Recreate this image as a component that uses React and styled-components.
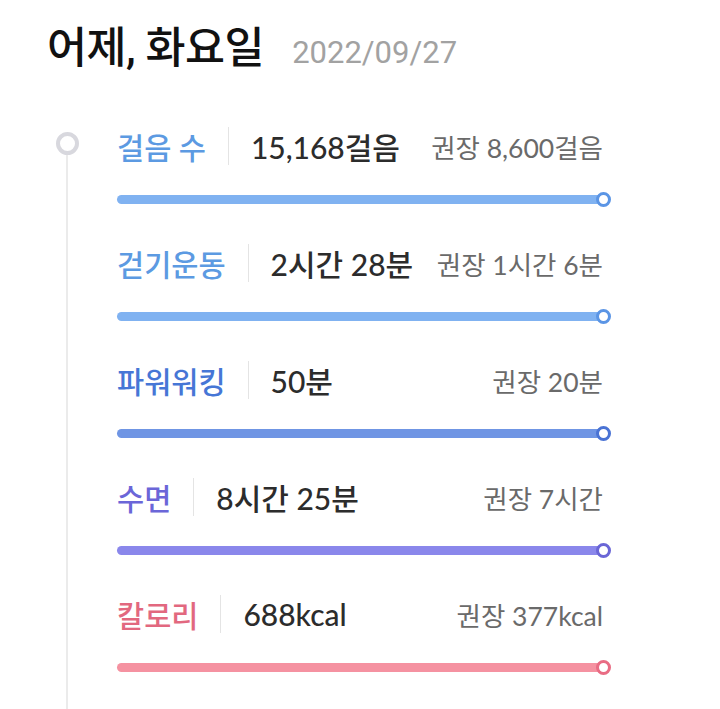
import React from 'react';
import styled, { createGlobalStyle } from "styled-components";

const GlobalStyle = createGlobalStyle`
  html, body {
    margin: 0;
    padding: 0;
    background: #ffffff;
  }
  body {
    font-family: "Lato", "Noto Sans CJK KR", sans-serif;
  }
`

const Page = styled.div`
  width: 720px;
  height: 709px;
  overflow: hidden;
  background: #ffffff;
  padding: 26px 0 0 47px;
  box-sizing: border-box;
`

const Header = styled.div`
  display: flex;
  align-items: baseline;
  gap: 28px;
  height: 46px;
`

const Title = styled.span`
  font-family: "Roboto", "Noto Sans CJK KR", sans-serif;
  font-size: 43.5px;
  font-weight: 500;
  color: #111111;
  line-height: 46px;
  letter-spacing: -0.5px;
`

const DateText = styled.span`
  font-family: "Roboto", "Noto Sans CJK KR", sans-serif;
  font-size: 31px;
  font-weight: 400;
  color: #a2a2a2;
`

const Body = styled.div`
  display: flex;
  margin-top: 54px;
  height: 600px;
`

const Timeline = styled.div`
  width: 40px;
  display: flex;
  flex-direction: column;
  align-items: center;
  margin-right: 30px;
  padding-top: 6px;
`

const TimelineDot = styled.div`
  width: 15px;
  height: 15px;
  border-radius: 50%;
  border: 4px solid #d8d8de;
  background: #ffffff;
`

const TimelineLine = styled.div`
  flex: 1;
  width: 2px;
  background: #ebebeb;
`

const List = styled.div`
  width: 494px;
  display: flex;
  flex-direction: column;
`

const Row = styled.div`
  height: 117px;
  display: flex;
  flex-direction: column;
`

const TopLine = styled.div`
  height: 40px;
  display: flex;
  align-items: center;
`

const Label = styled.span`
  font-size: 29.5px;
  font-weight: 500;
  color: ${p => p.color};
`

const Divider = styled.div`
  width: 1px;
  height: 38px;
  background: #e4e4e4;
  margin: 0 22px;
`

const Value = styled.span`
  font-size: 30px;
  font-weight: 500;
  color: #2c2c2c;
`

const Goal = styled.span`
  margin-left: auto;
  padding-right: 8px;
  font-size: 26.5px;
  font-weight: 400;
  color: #6a6a6a;
`

const Bar = styled.div`
  margin-top: 25px;
  height: 16px;
  display: flex;
  align-items: center;
`

const BarFill = styled.div`
  flex: 1;
  height: 9px;
  border-radius: 5px;
  background: ${p => p.color};
`

const BarEnd = styled.div`
  width: 9px;
  height: 9px;
  margin-left: -8px;
  border-radius: 50%;
  border: 3.5px solid ${p => p.color};
  background: #ffffff;
`

const items = [
  { label: "걸음 수", value: "15,168걸음", goal: "권장 8,600걸음", text: "#5c9ae2", bar: "#80b2f1", dot: "#5b95e5" },
  { label: "걷기운동", value: "2시간 28분", goal: "권장 1시간 6분", text: "#5c9ae2", bar: "#80b2f1", dot: "#5b95e5" },
  { label: "파워워킹", value: "50분", goal: "권장 20분", text: "#4676d6", bar: "#6f95e4", dot: "#4a73d4" },
  { label: "수면", value: "8시간 25분", goal: "권장 7시간", text: "#6b66d8", bar: "#8a87eb", dot: "#6a66d6" },
  { label: "칼로리", value: "688kcal", goal: "권장 377kcal", text: "#e2687f", bar: "#f592a1", dot: "#e96c84" },
];

export default function App() {
  return (
    <Page>
      <GlobalStyle />
      <Header>
        <Title>어제, 화요일</Title>
        <DateText>2022/09/27</DateText>
      </Header>
      <Body>
        <Timeline>
          <TimelineDot />
          <TimelineLine />
        </Timeline>
        <List>
          {items.map(item => (
            <Row key={item.label}>
              <TopLine>
                <Label color={item.text}>{item.label}</Label>
                <Divider />
                <Value>{item.value}</Value>
                <Goal>{item.goal}</Goal>
              </TopLine>
              <Bar>
                <BarFill color={item.bar} />
                <BarEnd color={item.dot} />
              </Bar>
            </Row>
          ))}
        </List>
      </Body>
    </Page>
  );
}
